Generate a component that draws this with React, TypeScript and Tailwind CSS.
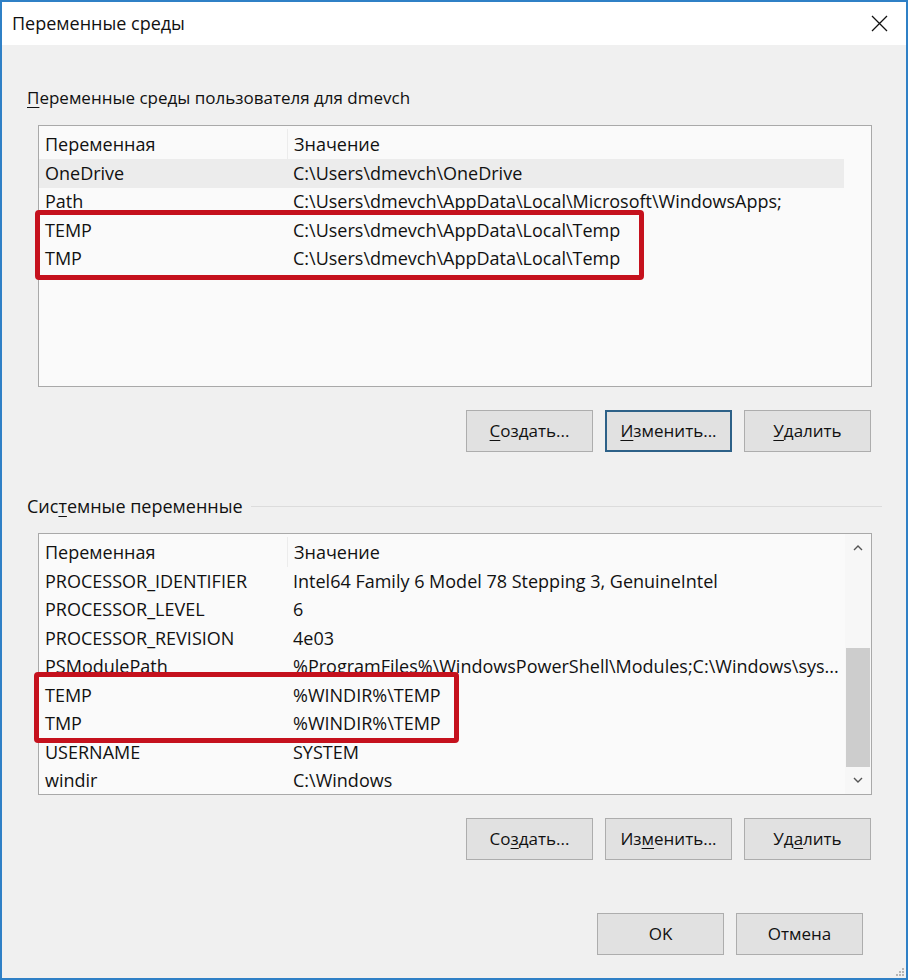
import React from 'react';

const font = { fontFamily: '"Open Sans", "Noto Sans", sans-serif' };

const userVars: [string, string][] = [
  ['OneDrive', 'C:\\Users\\dmevch\\OneDrive'],
  ['Path', 'C:\\Users\\dmevch\\AppData\\Local\\Microsoft\\WindowsApps;'],
  ['TEMP', 'C:\\Users\\dmevch\\AppData\\Local\\Temp'],
  ['TMP', 'C:\\Users\\dmevch\\AppData\\Local\\Temp'],
];

const sysVars: [string, string][] = [
  ['PROCESSOR_IDENTIFIER', 'Intel64 Family 6 Model 78 Stepping 3, GenuineIntel'],
  ['PROCESSOR_LEVEL', '6'],
  ['PROCESSOR_REVISION', '4e03'],
  ['PSModulePath', '%ProgramFiles%\\WindowsPowerShell\\Modules;C:\\Windows\\sys...'],
  ['TEMP', '%WINDIR%\\TEMP'],
  ['TMP', '%WINDIR%\\TEMP'],
  ['USERNAME', 'SYSTEM'],
  ['windir', 'C:\\Windows'],
];

const Btn = ({ pre, u, post, focus }: { pre: string; u?: string; post?: string; focus?: boolean }) => (
  <button
    className={
      'w-[127px] h-[42px] bg-[#e1e1e1] text-[17px] text-[#111] ' +
      (focus ? 'border-2 border-[#2d6188]' : 'border border-[#adadad]')
    }
  >
    {pre}
    {u && <span className="underline underline-offset-[3px]">{u}</span>}
    {post}
  </button>
);

const Row = ({ name, value, hl }: { name: string; value: string; hl?: boolean }) => (
  <div className={'flex h-[28.5px] items-center pl-[6px] whitespace-nowrap overflow-hidden ' + (hl ? 'bg-[#ececec] mr-[27px]' : '')}>
    <div className="w-[248px] shrink-0">{name}</div>
    <div>{value}</div>
  </div>
);

const Header = () => (
  <div className="flex h-[33px] items-center pl-[6px] pt-[3px] mr-[27px]">
    <div className="w-[242px] shrink-0">Переменная</div>
    <div className="border-l border-[#ececec] h-full flex items-center pl-[6px]">Значение</div>
  </div>
);

const RedBox = ({ cls }: { cls: string }) => (
  <div className={'absolute border-[5px] border-[#c5111d] rounded-[4px] pointer-events-none ' + cls} />
);

export default function App() {
  return (
    <div className="relative w-[908px] h-[980px] bg-[#f0f0f0] border-2 border-[#2f80c6] flex flex-col text-[#111]" style={font}>
      {/* title bar */}
      <div className="h-[43px] bg-white flex items-center justify-between pl-[10px] pr-[18px] shrink-0">
        <span className="text-[18px]">Переменные среды</span>
        <svg width="17" height="17" viewBox="0 0 17 17">
          <path d="M1 1L16 16M16 1L1 16" stroke="#111" strokeWidth="1.3" />
        </svg>
      </div>

      <div className="flex flex-col pl-[25px] pr-[34px] text-[18px]">
        {/* user section */}
        <div className="mt-[41px] h-[24px] leading-[24px] text-[17px]">
          <span className="underline underline-offset-[3px]">П</span>еременные среды пользователя для dmevch
        </div>
        <div className="relative mt-[15px] ml-[11px] h-[262px] bg-[#fafafa] border border-[#a9a9a9]">
          <Header />
          {userVars.map(([n, v], i) => (
            <Row key={n} name={n} value={v} hl={i === 0} />
          ))}
          <RedBox cls="left-[-4px] top-[84px] w-[609px] h-[70px]" />
        </div>
        <div className="flex justify-end gap-[12px] mt-[23px] mr-[1px]">
          <Btn pre="" u="С" post="оздать..." />
          <Btn pre="" u="И" post="зменить..." focus />
          <Btn pre="" u="У" post="далить" />
        </div>

        {/* system section */}
        <div className="flex items-center mt-[42px] h-[24px]">
          <span className="whitespace-nowrap">
            Сис<span className="underline underline-offset-[3px]">т</span>емные переменные
          </span>
          <div className="flex-1 border-t border-[#dcdcdc] ml-[8px] mr-[-10px]" />
        </div>
        <div className="relative mt-[15px] ml-[11px] h-[262px] bg-[#fafafa] border border-[#a9a9a9] flex">
          <div className="flex-1 min-w-0">
            <Header />
            {sysVars.map(([n, v]) => (
              <Row key={n + v} name={n} value={v} />
            ))}
          </div>
          <div className="w-[26px] shrink-0 flex flex-col items-center bg-[#f7f7f7]">
            <div className="h-[30px] flex items-center justify-center">
              <svg width="12" height="8" viewBox="0 0 12 8">
                <path d="M2 6L6 2L10 6" stroke="#555" strokeWidth="1.4" fill="none" />
              </svg>
            </div>
            <div className="flex-1 w-full flex flex-col px-[1px]">
              <div className="h-[85px]" />
              <div className="h-[119px] bg-[#cdcdcd]" />
              <div className="flex-1" />
            </div>
            <div className="h-[28px] flex items-center justify-center">
              <svg width="12" height="8" viewBox="0 0 12 8">
                <path d="M2 2L6 6L10 2" stroke="#555" strokeWidth="1.4" fill="none" />
              </svg>
            </div>
          </div>
          <RedBox cls="left-[-5px] top-[138px] w-[425px] h-[71px]" />
        </div>
        <div className="flex justify-end gap-[12px] mt-[23px] mr-[1px]">
          <Btn pre="Со" u="з" post="дать..." />
          <Btn pre="Из" u="м" post="енить..." />
          <Btn pre="Уд" u="а" post="лить" />
        </div>

        {/* OK / cancel */}
        <div className="flex justify-end gap-[12px] mt-[53px] mr-[9px]">
          <Btn pre="OK" />
          <Btn pre="Отмена" />
        </div>
      </div>

      {/* resize grip */}
      <svg className="absolute right-[1px] bottom-[1px]" width="10" height="10" viewBox="0 0 10 10">
        <rect x="7" y="1" width="2" height="2" fill="#b5b5b5" />
        <rect x="4" y="4" width="2" height="2" fill="#b5b5b5" />
        <rect x="7" y="4" width="2" height="2" fill="#b5b5b5" />
        <rect x="1" y="7" width="2" height="2" fill="#b5b5b5" />
        <rect x="4" y="7" width="2" height="2" fill="#b5b5b5" />
        <rect x="7" y="7" width="2" height="2" fill="#b5b5b5" />
      </svg>
    </div>
  );
}
